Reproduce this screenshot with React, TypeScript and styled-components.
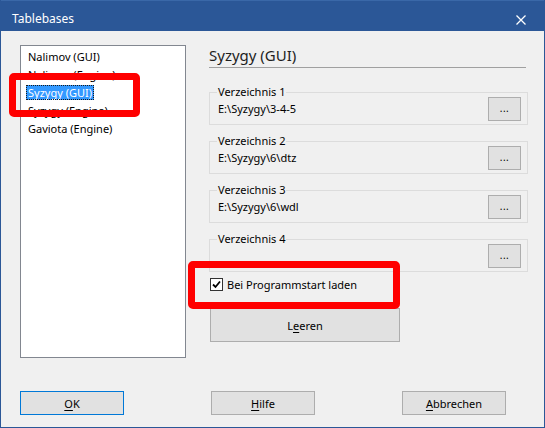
import styled, { createGlobalStyle } from 'styled-components'

// ---------------------------------------------------------------------------
// Global
// ---------------------------------------------------------------------------

const GlobalStyle = createGlobalStyle`
  html, body {
    margin: 0;
    padding: 0;
    background: #f0f0f0;
  }

  body {
    font-family: 'Noto Sans', sans-serif;
    font-size: 11px;
    color: #000;
  }
`

// ---------------------------------------------------------------------------
// Styled components
// ---------------------------------------------------------------------------

const Window = styled.div`
  position: relative;
  width: 545px;
  height: 428px;
  box-sizing: border-box;
  display: flex;
  flex-direction: column;
  background: #f0f0f0;
  border: 1px solid #2b5797;
  border-top: none;
  overflow: hidden;
`

const TitleBar = styled.div`
  height: 31px;
  flex-shrink: 0;
  display: flex;
  justify-content: space-between;
  align-items: flex-start;
  padding: 11px 0 0 11px;
  box-sizing: border-box;
  background: #2b5797;
  border-top: 1px solid #3a68a8;
  color: #fff;
  font-size: 12px;
  line-height: 14px;
`

const CloseButton = styled.div`
  width: 46px;
  display: flex;
  justify-content: center;
  padding-top: 3px;
`

const Body = styled.div`
  flex: 1;
  display: flex;
  flex-direction: column;
  padding: 14px 16px 0 19px;
`

const Main = styled.div`
  display: flex;
  gap: 23px;
  height: 313px;
`

const ListBox = styled.div`
  width: 166px;
  box-sizing: border-box;
  background: #fff;
  border: 1px solid #828790;
  padding: 1px 0 0 5px;
  display: flex;
  flex-direction: column;
`

const ListItem = styled.div`
  height: 18px;
  display: flex;
  align-items: center;
`

const ItemLabel = styled.span<{ $selected?: boolean }>`
  padding: 0 2px;
  line-height: 15px;
  color: ${(p) => (p.$selected ? '#fff' : '#000')};
  background: ${(p) => (p.$selected ? '#3399ff' : 'transparent')};
  outline: ${(p) => (p.$selected ? '1px dotted #1a1a1a' : 'none')};
  outline-offset: -1px;
`

const RightPanel = styled.div`
  width: 319px;
  display: flex;
  flex-direction: column;
`

const Heading = styled.div`
  font-size: 15px;
  line-height: 20px;
  color: #1e1e1e;
  padding-bottom: 2px;
  margin-right: 2px;
  border-bottom: 1px solid #a0a0a0;
`

const Groups = styled.div`
  display: flex;
  flex-direction: column;
  gap: 10px;
  margin-top: 18px;
`

const Group = styled.fieldset`
  margin: 0;
  padding: 0 6px 3px 8px;
  border: 1px solid #dcdcdc;
  min-width: 0;
`

const GroupLabel = styled.legend`
  padding: 0 1px;
  margin-left: -1px;
  line-height: 12px;
`

const GroupRow = styled.div`
  display: flex;
  justify-content: space-between;
  align-items: center;
  margin-top: -1px;
`

const PathText = styled.span`
  line-height: 14px;
`

const Button = styled.button<{ $default?: boolean }>`
  box-sizing: border-box;
  font-family: 'Noto Sans', sans-serif;
  font-size: 11px;
  color: #000;
  background: #e1e1e1;
  border: 1px solid ${(p) => (p.$default ? '#0078d7' : '#adadad')};
  padding: 0;
  margin: 0;
  display: inline-flex;
  align-items: center;
  justify-content: center;
`

const BrowseButton = styled(Button)`
  width: 33px;
  height: 24px;
  font-size: 10px;
  letter-spacing: 0.5px;
  padding-bottom: 2px;
`

const CheckRow = styled.label`
  display: flex;
  align-items: center;
  gap: 4px;
  margin-top: 6px;
  margin-left: 1px;
  height: 13px;
`

const CheckBox = styled.span`
  width: 13px;
  height: 13px;
  box-sizing: border-box;
  border: 1px solid #333;
  background: #fff;
  display: grid;
  place-items: center;
`

const ClearButton = styled(Button)`
  width: 190px;
  height: 34px;
  margin: 17px 0 0 1px;
`

const Footer = styled.div`
  display: flex;
  gap: 87px;
  margin-top: 33px;
`

const DialogButton = styled(Button)`
  width: 104px;
  height: 24px;
`

const Mnemonic = styled.u`
  text-decoration-thickness: 1px;
  text-underline-offset: 2px;
`

const Annotation = styled.div`
  position: absolute;
  box-sizing: border-box;
  border: 7px solid #ff0000;
  border-radius: 5px;
  pointer-events: none;
`

// ---------------------------------------------------------------------------
// Data
// ---------------------------------------------------------------------------

const tablebases = [
  'Nalimov (GUI)',
  'Nalimov (Engine)',
  'Syzygy (GUI)',
  'Syzygy (Engine)',
  'Gaviota (Engine)',
]

const directories = [
  { label: 'Verzeichnis 1', path: 'E:\\Syzygy\\3-4-5' },
  { label: 'Verzeichnis 2', path: 'E:\\Syzygy\\6\\dtz' },
  { label: 'Verzeichnis 3', path: 'E:\\Syzygy\\6\\wdl' },
  { label: 'Verzeichnis 4', path: '' },
]

// ---------------------------------------------------------------------------
// Component
// ---------------------------------------------------------------------------

export default function App() {
  const selected = 'Syzygy (GUI)'

  return (
    <>
      <GlobalStyle />
      <Window>
        <TitleBar>
          <span>Tablebases</span>
          <CloseButton>
            <svg width="10" height="10" viewBox="0 0 10 10">
              <path d="M0.5 0.5 L9.5 9.5 M9.5 0.5 L0.5 9.5" stroke="#fff" strokeWidth="1.3" />
            </svg>
          </CloseButton>
        </TitleBar>

        <Body>
          <Main>
            <ListBox>
              {tablebases.map((name) => (
                <ListItem key={name}>
                  <ItemLabel $selected={name === selected}>{name}</ItemLabel>
                </ListItem>
              ))}
            </ListBox>

            <RightPanel>
              <Heading>{selected}</Heading>

              <Groups>
                {directories.map((dir) => (
                  <Group key={dir.label}>
                    <GroupLabel>{dir.label}</GroupLabel>
                    <GroupRow>
                      <PathText>{dir.path}</PathText>
                      <BrowseButton>...</BrowseButton>
                    </GroupRow>
                  </Group>
                ))}
              </Groups>

              <CheckRow>
                <CheckBox>
                  <svg width="9" height="9" viewBox="0 0 9 9">
                    <path d="M1 4.5 L3.5 7 L8 1.5" fill="none" stroke="#000" strokeWidth="1.8" />
                  </svg>
                </CheckBox>
                Bei Programmstart laden
              </CheckRow>

              <ClearButton>
                L<Mnemonic>e</Mnemonic>eren
              </ClearButton>
            </RightPanel>
          </Main>

          <Footer>
            <DialogButton $default>
              <Mnemonic>O</Mnemonic>K
            </DialogButton>
            <DialogButton>
              <Mnemonic>H</Mnemonic>ilfe
            </DialogButton>
            <DialogButton>
              <Mnemonic>A</Mnemonic>bbrechen
            </DialogButton>
          </Footer>
        </Body>

        <Annotation style={{ left: 8, top: 73, width: 131, height: 44 }} />
        <Annotation style={{ left: 187, top: 261, width: 212, height: 48 }} />
      </Window>
    </>
  )
}
